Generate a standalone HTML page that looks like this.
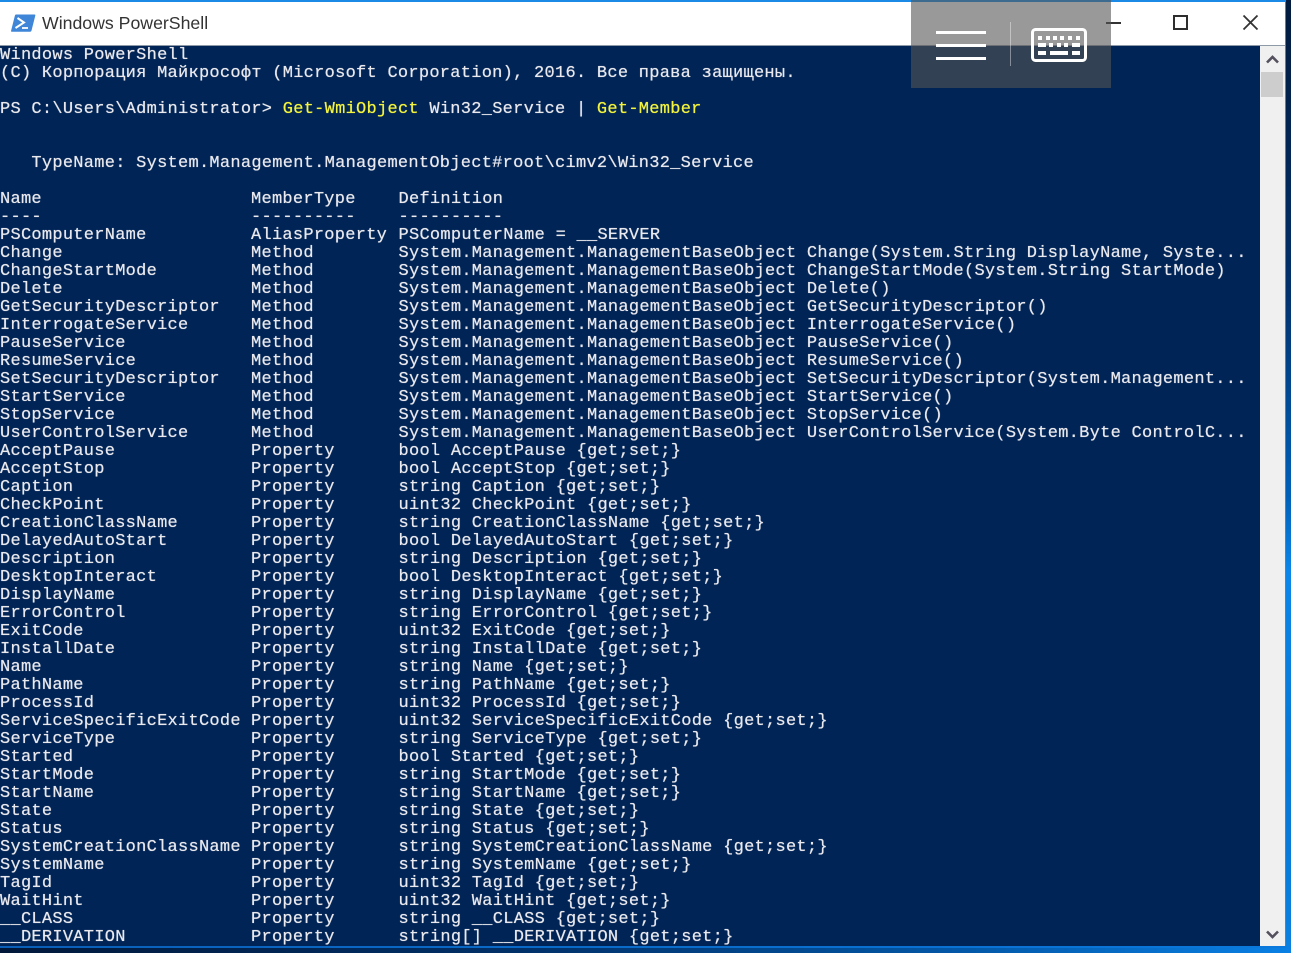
<!DOCTYPE html>
<html>
<head>
<meta charset="utf-8">
<title>Windows PowerShell</title>
<style>
html,body{margin:0;padding:0;width:1291px;height:953px;overflow:hidden;background:#012456}
#stage{position:relative;width:1291px;height:953px;overflow:hidden}
.abs{position:absolute}
#console{left:0;top:45px;width:1260px;height:902px;background:#012456;overflow:hidden}
#text{position:absolute;left:0;top:2px;font-family:"Liberation Mono","Noto Sans CJK SC",monospace;font-size:17px;line-height:18px;letter-spacing:.27px;color:#e9e9ee;text-shadow:0 0 .6px #e9e9ee;filter:blur(.3px)}
#text div{height:18px;white-space:pre}
#text b{display:inline-block;width:251px;font-weight:normal}
#text i{display:inline-block;width:147.5px;font-style:normal}
#text u{text-decoration:none;color:#f4f43c;text-shadow:0 0 .6px #f4f43c}
#title{left:0;top:0;width:1285px;height:46px;background:#fff;border-top:2px solid #1a8ae6;box-sizing:border-box;border-bottom:1px solid #8f9aa8}
#ttext{left:42px;top:12px;font-family:"Liberation Sans",sans-serif;font-size:17.7px;line-height:22px;color:#333;white-space:pre;filter:blur(.25px)}
#overlay{left:911px;top:0;width:200px;height:88px;background:rgba(85,85,85,.6)}
#sb{left:1260px;top:46px;width:25px;height:901px;background:#f0f0f0}
#thumb{left:1261px;top:72px;width:22px;height:25px;background:#cdcdcd}
#right{left:1286px;top:0;width:5px;height:953px;background:linear-gradient(#021b3e 0,#02306a 30%,#0060b8 52%,#0a86ea 60%,#0677d4 80%,#0a80e0 100%)}
#redge{left:1285px;top:0;width:1px;height:947px;background:#2a8ee0}
#bottom{left:0;top:947px;width:1291px;height:6px;background:linear-gradient(90deg,#01183a 0,#013068 40%,#0358a8 75%,#0a80e4 100%)}
#bline{left:0;top:946px;width:1286px;height:2px;background:linear-gradient(90deg,#0a5fb8,#0a78dc)}
</style>
</head>
<body>
<div id="stage">
<div id="console" class="abs">
<div id="text">
<div>Windows PowerShell</div>
<div>(C) Корпорация Майкрософт (Microsoft Corporation), 2016. Все права защищены.</div>
<div></div>
<div>PS C:\Users\Administrator&gt; <u>Get-WmiObject</u> Win32_Service | <u>Get-Member</u></div>
<div></div>
<div></div>
<div>   TypeName: System.Management.ManagementObject#root\cimv2\Win32_Service</div>
<div></div>
<div><b>Name</b><i>MemberType</i>Definition</div>
<div><b>----</b><i>----------</i>----------</div>
<div><b>PSComputerName</b><i>AliasProperty</i>PSComputerName = __SERVER</div>
<div><b>Change</b><i>Method</i>System.Management.ManagementBaseObject Change(System.String DisplayName, Syste...</div>
<div><b>ChangeStartMode</b><i>Method</i>System.Management.ManagementBaseObject ChangeStartMode(System.String StartMode)</div>
<div><b>Delete</b><i>Method</i>System.Management.ManagementBaseObject Delete()</div>
<div><b>GetSecurityDescriptor</b><i>Method</i>System.Management.ManagementBaseObject GetSecurityDescriptor()</div>
<div><b>InterrogateService</b><i>Method</i>System.Management.ManagementBaseObject InterrogateService()</div>
<div><b>PauseService</b><i>Method</i>System.Management.ManagementBaseObject PauseService()</div>
<div><b>ResumeService</b><i>Method</i>System.Management.ManagementBaseObject ResumeService()</div>
<div><b>SetSecurityDescriptor</b><i>Method</i>System.Management.ManagementBaseObject SetSecurityDescriptor(System.Management...</div>
<div><b>StartService</b><i>Method</i>System.Management.ManagementBaseObject StartService()</div>
<div><b>StopService</b><i>Method</i>System.Management.ManagementBaseObject StopService()</div>
<div><b>UserControlService</b><i>Method</i>System.Management.ManagementBaseObject UserControlService(System.Byte ControlC...</div>
<div><b>AcceptPause</b><i>Property</i>bool AcceptPause {get;set;}</div>
<div><b>AcceptStop</b><i>Property</i>bool AcceptStop {get;set;}</div>
<div><b>Caption</b><i>Property</i>string Caption {get;set;}</div>
<div><b>CheckPoint</b><i>Property</i>uint32 CheckPoint {get;set;}</div>
<div><b>CreationClassName</b><i>Property</i>string CreationClassName {get;set;}</div>
<div><b>DelayedAutoStart</b><i>Property</i>bool DelayedAutoStart {get;set;}</div>
<div><b>Description</b><i>Property</i>string Description {get;set;}</div>
<div><b>DesktopInteract</b><i>Property</i>bool DesktopInteract {get;set;}</div>
<div><b>DisplayName</b><i>Property</i>string DisplayName {get;set;}</div>
<div><b>ErrorControl</b><i>Property</i>string ErrorControl {get;set;}</div>
<div><b>ExitCode</b><i>Property</i>uint32 ExitCode {get;set;}</div>
<div><b>InstallDate</b><i>Property</i>string InstallDate {get;set;}</div>
<div><b>Name</b><i>Property</i>string Name {get;set;}</div>
<div><b>PathName</b><i>Property</i>string PathName {get;set;}</div>
<div><b>ProcessId</b><i>Property</i>uint32 ProcessId {get;set;}</div>
<div><b>ServiceSpecificExitCode</b><i>Property</i>uint32 ServiceSpecificExitCode {get;set;}</div>
<div><b>ServiceType</b><i>Property</i>string ServiceType {get;set;}</div>
<div><b>Started</b><i>Property</i>bool Started {get;set;}</div>
<div><b>StartMode</b><i>Property</i>string StartMode {get;set;}</div>
<div><b>StartName</b><i>Property</i>string StartName {get;set;}</div>
<div><b>State</b><i>Property</i>string State {get;set;}</div>
<div><b>Status</b><i>Property</i>string Status {get;set;}</div>
<div><b>SystemCreationClassName</b><i>Property</i>string SystemCreationClassName {get;set;}</div>
<div><b>SystemName</b><i>Property</i>string SystemName {get;set;}</div>
<div><b>TagId</b><i>Property</i>uint32 TagId {get;set;}</div>
<div><b>WaitHint</b><i>Property</i>uint32 WaitHint {get;set;}</div>
<div><b>__CLASS</b><i>Property</i>string __CLASS {get;set;}</div>
<div><b>__DERIVATION</b><i>Property</i>string[] __DERIVATION {get;set;}</div>
</div>
</div>

<div id="title" class="abs"></div>
<svg class="abs" style="left:10px;top:12px" width="27" height="22" viewBox="0 0 27 22">
  <path d="M6 2.5H24.5Q25.6 2.5 25.3 3.6L21.5 18.6Q21.2 19.8 20 19.8H2Q.8 19.8 1.1 18.6L4.9 3.6Q5.2 2.5 6 2.5Z" fill="#3f86d8"/>
  <path d="M7.5 6L14 10.5L5.5 16" fill="none" stroke="#fff" stroke-width="2"/>
  <path d="M12 16H18" fill="none" stroke="#fff" stroke-width="1.8"/>
</svg>
<div id="ttext" class="abs">Windows PowerShell</div>

<div class="abs" style="left:1106px;top:22px;width:15px;height:2px;background:#333"></div>
<div class="abs" style="left:1173px;top:15px;width:15px;height:15px;box-sizing:border-box;border:2px solid #2e2e2e"></div>
<svg class="abs" style="left:1242px;top:14px" width="17" height="17" viewBox="0 0 17 17"><path d="M1.5 1.5L15.5 15.5M15.5 1.5L1.5 15.5" stroke="#333" stroke-width="1.8" fill="none"/></svg>

<div id="sb" class="abs"></div>
<div id="thumb" class="abs"></div>
<svg class="abs" style="left:1265px;top:54px" width="15" height="11" viewBox="0 0 15 11"><path d="M2 8.5L7.5 3L13 8.5" stroke="#55505e" stroke-width="2.6" fill="none"/></svg>
<svg class="abs" style="left:1265px;top:929px" width="15" height="11" viewBox="0 0 15 11"><path d="M2 2.5L7.5 8L13 2.5" stroke="#55505e" stroke-width="2.6" fill="none"/></svg>

<div id="redge" class="abs"></div>
<div id="right" class="abs"></div>
<div id="bottom" class="abs"></div>
<div id="bline" class="abs"></div>

<div id="overlay" class="abs"></div>
<div class="abs" style="left:936px;top:31px;width:50px;height:3px;background:#fff"></div>
<div class="abs" style="left:936px;top:44px;width:50px;height:3px;background:#fff"></div>
<div class="abs" style="left:936px;top:57px;width:50px;height:3px;background:#fff"></div>
<div class="abs" style="left:1010px;top:22px;width:1px;height:44px;background:rgba(255,255,255,.4)"></div>
<svg class="abs" style="left:1031px;top:28px" width="56" height="34" viewBox="0 0 56 34">
  <rect x="1.5" y="1.5" width="53" height="31" rx="3" fill="none" stroke="#fff" stroke-width="3"/>
  <g fill="#fff">
    <rect x="7" y="8" width="4" height="4"/><rect x="15" y="8" width="4" height="4"/><rect x="22" y="8" width="4" height="4"/><rect x="29" y="8" width="4" height="4"/><rect x="37" y="8" width="4" height="4"/><rect x="45" y="8" width="4" height="4"/>
    <rect x="7" y="15" width="8" height="4"/><rect x="18" y="15" width="4" height="4"/><rect x="26" y="15" width="4" height="4"/><rect x="33" y="15" width="4" height="4"/><rect x="41" y="15" width="8" height="4"/>
    <rect x="7" y="23" width="8" height="4"/><rect x="19" y="23" width="18" height="4"/><rect x="41" y="23" width="8" height="4"/>
  </g>
</svg>
</div>
</body>
</html>
